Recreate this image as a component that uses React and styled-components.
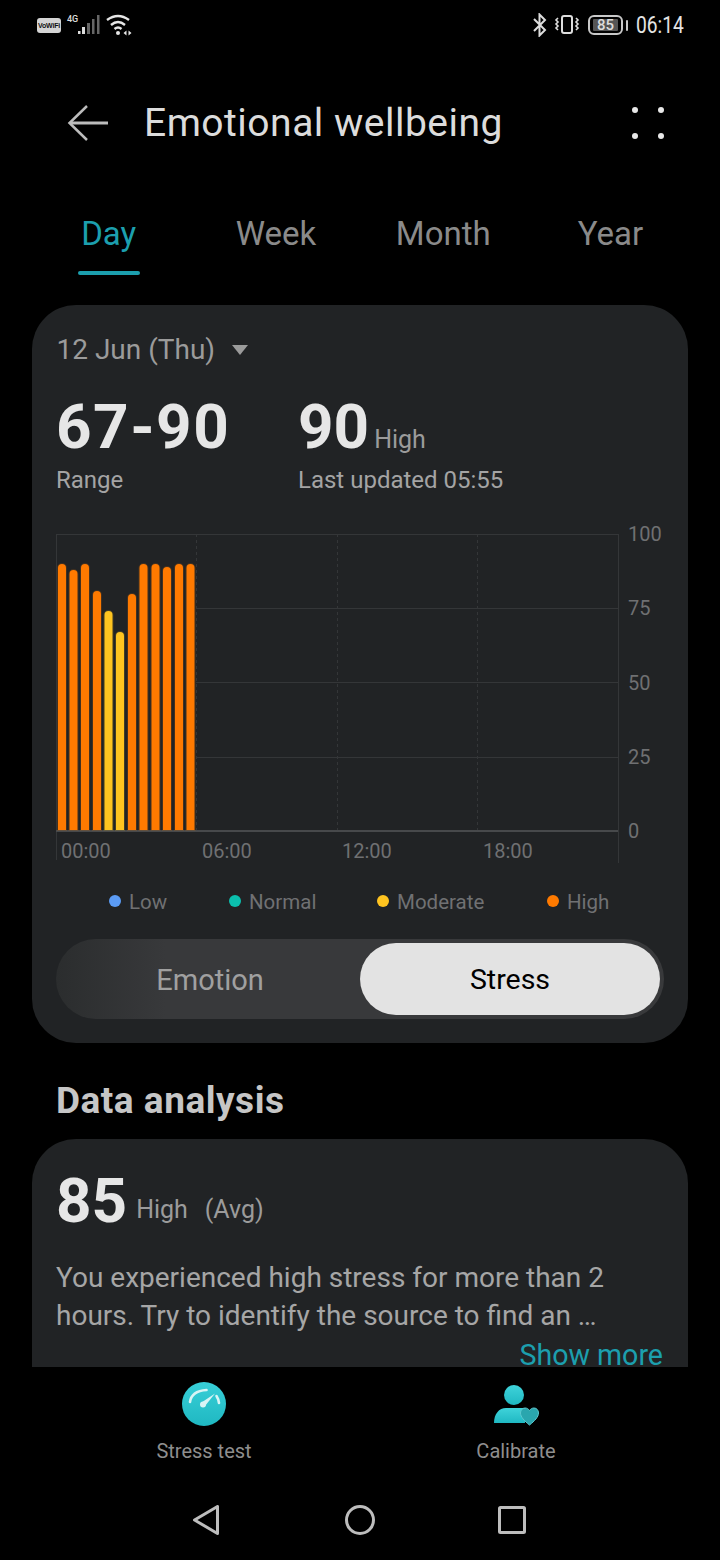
import React from "react";
import styled, { createGlobalStyle } from "styled-components";

const GlobalStyle = createGlobalStyle`
  html, body { margin: 0; padding: 0; background: #000; }
  body { font-family: Roboto, "Noto Sans", sans-serif; }
`;

const Screen = styled.div`
  width: 720px;
  height: 1560px;
  background: #000;
  color: #fff;
  display: flex;
  flex-direction: column;
  overflow: hidden;
`;

const StatusBar = styled.div`
  height: 50px;
  flex: none;
  padding: 0 37px;
  display: flex;
  align-items: center;
  justify-content: space-between;
`;

const StatusGroup = styled.div`
  display: flex;
  align-items: center;
`;

const VoWifi = styled.span`
  width: 24px;
  height: 15px;
  border-radius: 3px;
  background: #d4d4d4;
  color: #111;
  font: 700 7px/15px "Liberation Sans", sans-serif;
  text-align: center;
  letter-spacing: -0.2px;
`;

const SignalLabel = styled.span`
  width: 10px;
  font: 500 9px/9px Roboto, sans-serif;
  color: #ddd;
  margin: -11px 1px 0 6px;
  white-space: nowrap;
`;

const BatteryBox = styled.div`
  width: 35px;
  height: 20px;
  box-sizing: border-box;
  border: 2px solid #c8c8c8;
  border-radius: 6px;
  padding: 2px 3px;
  margin-left: 8px;
  display: flex;
`;

const BatteryFill = styled.div`
  flex: 1;
  background: #555;
  border-radius: 1px;
  color: #ddd;
  font: 500 15px/12px Roboto, sans-serif;
  text-align: center;
`;

const BatteryCap = styled.div`
  width: 2px;
  height: 11px;
  background: #c8c8c8;
  border-radius: 1px;
  margin-left: 3px;
`;

const Clock = styled.span`
  display: inline-block;
  width: 47px;
  margin-left: 8px;
  font-size: 24px;
  color: #e4e4e4;
  white-space: nowrap;
  transform: scaleX(0.8);
  transform-origin: left center;
`;

const Header = styled.header`
  height: 146px;
  flex: none;
  padding: 0 56px 0 67px;
  display: flex;
  align-items: center;
  box-sizing: border-box;
`;

const Title = styled.h1`
  flex: 1;
  margin: 0 0 0 35px;
  font-size: 39px;
  font-weight: 400;
  color: #dcdcdc;
  letter-spacing: 0.5px;
`;

const Tabs = styled.nav`
  flex: none;
  height: 79px;
  padding: 0 25px;
  display: grid;
  grid-template-columns: repeat(4, 167.3px);
`;

const Tab = styled.div`
  position: relative;
  text-align: center;
  font-size: 33px;
  line-height: 76px;
  color: ${(p) => (p.$active ? "#1c9fae" : "#8a8a8a")};
  ${(p) =>
    p.$active &&
    `&::after {
      content: "";
      position: absolute;
      left: 53px;
      bottom: 0;
      width: 62px;
      height: 4px;
      border-radius: 2px;
      background: #1c9fae;
    }`}
`;

const Body = styled.main`
  flex: 1;
  min-height: 0;
  padding: 30px 32px 0;
`;

const Card = styled.section`
  background: #212325;
  border-radius: ${(p) => (p.$cut ? "44px 44px 0 0" : "44px")};
  box-sizing: border-box;
  padding: ${(p) => p.$pad || "24px"};
  ${(p) => p.$height && `height: ${p.$height}px;`}
`;

const DateRow = styled.div`
  display: flex;
  align-items: center;
  gap: 17px;
  margin: 1px 0 0 0.5px;
  font-size: 28px;
  line-height: 40px;
  color: #9b9b9b;
`;

const Caret = styled.span`
  width: 0;
  height: 0;
  border-left: 8px solid transparent;
  border-right: 8px solid transparent;
  border-top: 10px solid #9b9b9b;
`;

const Stats = styled.div`
  display: flex;
  gap: 70px;
  margin-top: 22px;
`;

const Stat = styled.div`
  display: flex;
  flex-direction: column;
  ${(p) => p.$width && `flex: none; width: ${p.$width}px;`}
`;

const ValueRow = styled.div`
  display: flex;
  align-items: baseline;
  gap: 5px;
`;

const BigNum = styled.span`
  font-size: 62px;
  line-height: 70px;
  font-weight: 700;
  color: #e6e6e6;
  white-space: nowrap;
  letter-spacing: ${(p) => p.$spacing || 0}px;
`;

const Unit = styled.span`
  font-size: 25px;
  color: #9b9b9b;
  white-space: pre;
`;

const Sub = styled.span`
  font-size: 24px;
  line-height: 36px;
  color: #a4a4a4;
`;

const ChartSvg = styled.svg`
  display: block;
  margin: 16px 0 0;
  text {
    font-family: Roboto, sans-serif;
    font-size: 20px;
    fill: #6f7072;
  }
`;

const Legend = styled.div`
  display: grid;
  grid-template-columns: 120px 148px 170px 1fr;
  padding-left: 53px;
  margin-top: 23px;
`;

const LegendItem = styled.div`
  display: flex;
  align-items: center;
  gap: 8px;
  font-size: 20.5px;
  line-height: 30px;
  color: #707173;
  &::before {
    content: "";
    width: 12px;
    height: 12px;
    border-radius: 50%;
    background: ${(p) => p.$color};
    margin-top: -3px;
  }
`;

const Toggle = styled.div`
  margin-top: 22px;
  height: 80px;
  box-sizing: border-box;
  padding: 4px;
  border-radius: 40px;
  background: linear-gradient(90deg, #2b2d2e 0%, #38393b 18%, #38393b 100%);
  display: flex;
`;

const ToggleOption = styled.div`
  flex: none;
  width: 300px;
  border-radius: 36px;
  text-align: center;
  font-size: ${(p) => (p.$active ? 28.5 : 29)}px;
  line-height: 74px;
  color: ${(p) => (p.$active ? "#000" : "#a0a0a0")};
  background: ${(p) => (p.$active ? "#e3e3e3" : "transparent")};
`;

const SectionTitle = styled.h2`
  margin: 38px 0 18px 24px;
  font-size: 37px;
  letter-spacing: 0.5px;
  line-height: 40px;
  font-weight: 700;
  color: #c6c6c6;
`;

const Avg = styled.div`
  display: flex;
  align-items: center;
  gap: 9px;
  ${Unit} {
    margin-top: 17px;
    word-spacing: -0.6px;
  }
`;

const Paragraph = styled.p`
  margin: 23px 0 0;
  font-size: 28px;
  line-height: 38px;
  color: #a6a6a6;
`;

const ShowMore = styled.div`
  margin: 7px 1px 0 0;
  text-align: right;
  font-size: 28.6px;
  line-height: 26px;
  color: #1c9fae;
`;

const ActionBar = styled.div`
  flex: none;
  height: 138px;
  background: #000;
  display: grid;
  grid-template-columns: 1fr 1fr;
  padding: 0 48px;
`;

const Action = styled.div`
  display: flex;
  flex-direction: column;
  align-items: center;
  padding-top: 15px;
  gap: 13px;
  font-size: 20px;
  line-height: 24px;
  color: #8e8e8e;
  svg { display: block; }
`;

const NavBar = styled.div`
  flex: none;
  height: 55px;
  display: grid;
  grid-template-columns: 153px 153px auto;
  grid-auto-rows: 30px;
  align-items: center;
  padding-left: 192px;
  svg { display: block; }
`;

const bars = [
  [62, 564, "#ff7a00"], [73.5, 570, "#ff7a00"], [85, 564, "#ff7a00"], [97, 591, "#ff7a00"],
  [108.5, 611, "#ffc420"], [120, 632, "#ffc420"], [132, 594, "#ff7a00"], [143.5, 564, "#ff7a00"],
  [155.5, 564, "#ff7a00"], [167, 567, "#ff7a00"], [179, 564, "#ff7a00"], [190.5, 564, "#ff7a00"],
];

function Chart() {
  return (
    <ChartSvg width="608" height="350" viewBox="56 514 608 350">
      <g stroke="#343638" strokeWidth="1" fill="none">
        <path d="M56 534.5H618M196 608.5H618M196 682.5H618M196 757.5H618" />
        <path d="M56.5 534V860M618.5 534V863" />
        <path d="M196.5 534V831M337.5 534V831M477.5 534V831" strokeDasharray="3 3" />
      </g>
      <path d="M56 831H618" stroke="#47494b" strokeWidth="2" />
      {bars.map(([x, top, color]) => (
        <path
          key={x}
          d={`M${x - 4} 830V${top + 4}a4 4 0 0 1 8 0V830Z`}
          fill={color}
          stroke={color}
          strokeOpacity="0.16"
          strokeWidth="2"
        />
      ))}
      {[["100", 534], ["75", 608], ["50", 683], ["25", 757], ["0", 831]].map(([t, y]) => (
        <text key={t} x="628" y={y + 7}>{t}</text>
      ))}
      {[["00:00", 61], ["06:00", 202], ["12:00", 342], ["18:00", 483]].map(([t, x]) => (
        <text key={t} x={x} y="858">{t}</text>
      ))}
    </ChartSvg>
  );
}

export default function App() {
  return (
    <Screen>
      <GlobalStyle />
      <StatusBar>
        <StatusGroup>
          <VoWifi>VoWiFi</VoWifi>
          <SignalLabel>4G</SignalLabel>
          <svg width="22" height="24" viewBox="0 0 22 24">
            <rect x="0" y="18" width="2.500" height="3" fill="#ddd" />
            <rect x="4" y="14" width="3" height="7" fill="#ddd" />
            <rect x="9" y="10" width="3" height="11" fill="#666" />
            <rect x="14" y="6" width="2.500" height="15" fill="#666" />
            <rect x="19" y="2" width="2.500" height="19" fill="#666" />
          </svg>
          <svg width="27" height="24" viewBox="0 0 27 24" style={{ marginLeft: 5 }}>
            <g fill="none" stroke="#e6e6e6" strokeWidth="2.400">
              <path d="M2 7Q13-1 24 7" />
              <path d="M6 12Q13 6 20 12" />
              <path d="M9.500 16Q13 13 16.500 16" />
            </g>
            <circle cx="13" cy="20" r="2" fill="#e6e6e6" />
            <path d="M18.500 20l3-2.500v5zM26.500 20l-3-2.500v5z" fill="#e6e6e6" />
          </svg>
        </StatusGroup>
        <StatusGroup>
          <svg width="14" height="24" viewBox="0 0 14 24" fill="none" stroke="#ddd" strokeWidth="2">
            <path d="M1 6l11 11-5.500 5.500V1.500L12 7 1 18" />
          </svg>
          <svg width="26" height="22" viewBox="0 0 26 22" fill="none" stroke="#ddd" strokeWidth="2" style={{ marginLeft: 7 }}>
            <rect x="8" y="2" width="10" height="17" rx="2" />
            <path d="M4 4l-2 2 2 2-2 2 2 2-2 2 2 2M22 4l2 2-2 2 2 2-2 2 2 2-2 2" strokeWidth="1.600" />
          </svg>
          <BatteryBox>
            <BatteryFill>85</BatteryFill>
          </BatteryBox>
          <BatteryCap />
          <Clock>06:14</Clock>
        </StatusGroup>
      </StatusBar>

      <Header>
        <svg width="42" height="38" viewBox="0 0 42 38" fill="none" stroke="#bcbcbc" strokeWidth="2.500">
          <path d="M41 19H3" strokeWidth="3" />
          <path d="M20 2L2.500 19 20 36" />
        </svg>
        <Title>Emotional wellbeing</Title>
        <svg width="32" height="32" viewBox="0 0 32 32" fill="#e8e8e8">
          <circle cx="3" cy="3" r="3" />
          <circle cx="29" cy="3" r="3" />
          <circle cx="3" cy="29" r="3" />
          <circle cx="29" cy="29" r="3" />
        </svg>
      </Header>

      <Tabs>
        <Tab $active>Day</Tab>
        <Tab>Week</Tab>
        <Tab>Month</Tab>
        <Tab>Year</Tab>
      </Tabs>

      <Body>
        <Card $height={738} $pad="24px 24px 0">
          <DateRow>
            12 Jun (Thu)
            <Caret />
          </DateRow>
          <Stats>
            <Stat $width={172}>
              <BigNum $spacing={1.5}>67-90</BigNum>
              <Sub>Range</Sub>
            </Stat>
            <Stat>
              <ValueRow>
                <BigNum>90</BigNum>
                <Unit>High</Unit>
              </ValueRow>
              <Sub>Last updated 05:55</Sub>
            </Stat>
          </Stats>
          <Chart />
          <Legend>
            <LegendItem $color="#5b9bf5">Low</LegendItem>
            <LegendItem $color="#0bbfae">Normal</LegendItem>
            <LegendItem $color="#ffc420">Moderate</LegendItem>
            <LegendItem $color="#ff7a00">High</LegendItem>
          </Legend>
          <Toggle>
            <ToggleOption>Emotion</ToggleOption>
            <ToggleOption $active>Stress</ToggleOption>
          </Toggle>
        </Card>

        <SectionTitle>Data analysis</SectionTitle>

        <Card $cut $pad="27px 24px 0">
          <Avg>
            <BigNum>85</BigNum>
            <Unit>High   (Avg)</Unit>
          </Avg>
          <Paragraph>
            You experienced high stress for more than 2 hours. Try to identify the source to find an …
          </Paragraph>
          <ShowMore>Show more</ShowMore>
        </Card>
      </Body>

      <ActionBar>
        <Action>
          <svg width="44" height="44" viewBox="0 0 44 44">
            <defs>
              <linearGradient id="tealA" x1="0" y1="0" x2="0" y2="1">
                <stop offset="0" stopColor="#38cfd8" />
                <stop offset="1" stopColor="#1fb8c2" />
              </linearGradient>
            </defs>
            <circle cx="22" cy="22" r="22" fill="url(#tealA)" />
            <g fill="none" stroke="#d8f4f5" strokeWidth="2.600" strokeLinecap="round">
              <path d="M8 20Q9.500 9 24.500 8" />
              <path d="M34.500 14Q36.500 17 37 21" />
            </g>
            <path d="M19.500 20.500L33 11.500 23 24z" fill="#d8f4f5" />
            <circle cx="21" cy="22.500" r="3" fill="#d8f4f5" />
          </svg>
          Stress test
        </Action>
        <Action>
          <svg width="46" height="44" viewBox="0 0 46 44">
            <defs>
              <linearGradient id="tealB" x1="0" y1="0" x2="0" y2="1">
                <stop offset="0" stopColor="#3fd3da" />
                <stop offset="1" stopColor="#1fb8c2" />
              </linearGradient>
            </defs>
            <circle cx="21" cy="13" r="10" fill="url(#tealB)" />
            <path d="M1 41c0-9 5-15 12-15h19v15z" fill="url(#tealB)" />
            <path d="M36.500 43c-5-4-9-8-9-12 0-3 2-5 4.500-5 2 0 3.500 1 4.500 2.500 1-1.500 2.500-2.500 4.500-2.500 2.500 0 4.500 2 4.500 5 0 4-4 8-9 12z" fill="#2aa6ae" stroke="#5dc8cf" strokeWidth="1" />
          </svg>
          Calibrate
        </Action>
      </ActionBar>

      <NavBar>
        <svg width="27" height="30" viewBox="0 0 27 30" fill="none" stroke="#bdbdbd" strokeWidth="3" strokeLinejoin="round">
          <path d="M25.500 1.500v27L2.500 15z" />
        </svg>
        <svg width="30" height="30" viewBox="0 0 30 30" fill="none" stroke="#bdbdbd" strokeWidth="3">
          <circle cx="15" cy="15" r="13.500" />
        </svg>
        <svg width="28" height="28" viewBox="0 0 28 28" fill="none" stroke="#bdbdbd" strokeWidth="3" strokeLinejoin="round">
          <rect x="1.500" y="1.500" width="25" height="25" rx="1" />
        </svg>
      </NavBar>
    </Screen>
  );
}
